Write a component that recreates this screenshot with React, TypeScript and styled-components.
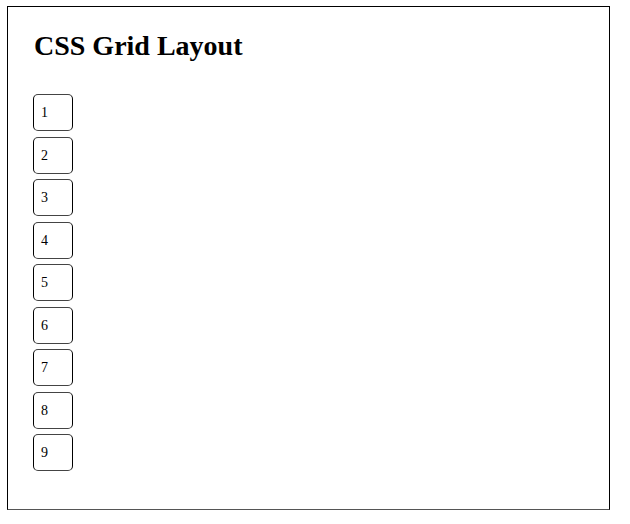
import styled, { createGlobalStyle } from "styled-components";

const GlobalStyle = createGlobalStyle`
  html, body {
    margin: 0;
    background: #ffffff;
  }
  body {
    font-family: "Liberation Serif", "Times New Roman", serif;
    color: #000000;
  }
`;

const SContainer = styled.div`
  box-sizing: border-box;
  margin: 6px 0 0 7px;
  width: 603px;
  height: 504px;
  border: 1px solid #000000;
  border-bottom-color: #555555;
  padding: 0 25px;
`;

const STitle = styled.h2`
  margin: 23px 0 32px 1px;
  font-size: 28px;
  font-weight: bold;
  line-height: normal;
`;

const SGrid = styled.div`
  display: grid;
  grid-template-columns: 40px;
  row-gap: 5.5px;
`;

const SItem = styled.div`
  box-sizing: border-box;
  height: 37px;
  padding: 10px 6px 0 7px;
  border: 1px solid #000000;
  border-top-color: #444444;
  border-bottom-color: #444444;
  border-radius: 5px;
  font-size: 14px;
  line-height: 16px;
`;

const items = [1, 2, 3, 4, 5, 6, 7, 8, 9];

export default function App() {
  return (
    <>
      <GlobalStyle />
      <SContainer>
        <STitle>CSS Grid Layout</STitle>
        <SGrid>
          {items.map(n => (
            <SItem key={n}>{n}</SItem>
          ))}
        </SGrid>
      </SContainer>
    </>
  );
}
